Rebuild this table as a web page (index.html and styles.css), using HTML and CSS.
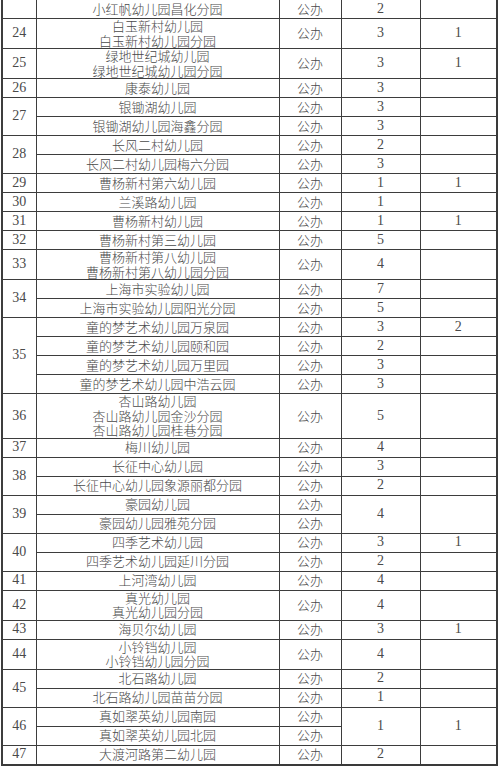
FILE: index.html
```html
<!DOCTYPE html>
<html lang="zh-CN">
<head>
<meta charset="utf-8">
<title>幼儿园名单</title>
<link rel="stylesheet" href="styles.css">
</head>
<body>
<div class="sheet">
<table class="list">
<colgroup>
<col class="c-no"><col class="c-name"><col class="c-type"><col class="c-num"><col class="c-extra">
</colgroup>
<tbody>
<tr class="first"><td class="no"></td><td>小红帆幼儿园昌化分园</td><td>公办</td><td class="num">2</td><td class="num"></td></tr>
<tr><td class="no">24</td><td class="multi">白玉新村幼儿园<br>白玉新村幼儿园分园</td><td>公办</td><td class="num">3</td><td class="num">1</td></tr>
<tr><td class="no">25</td><td class="multi">绿地世纪城幼儿园<br>绿地世纪城幼儿园分园</td><td>公办</td><td class="num">3</td><td class="num">1</td></tr>
<tr><td class="no">26</td><td>康泰幼儿园</td><td>公办</td><td class="num">3</td><td class="num"></td></tr>
<tr><td class="no" rowspan="2">27</td><td>银锄湖幼儿园</td><td>公办</td><td class="num">3</td><td class="num"></td></tr>
<tr><td>银锄湖幼儿园海鑫分园</td><td>公办</td><td class="num">3</td><td class="num"></td></tr>
<tr><td class="no" rowspan="2">28</td><td>长风二村幼儿园</td><td>公办</td><td class="num">2</td><td class="num"></td></tr>
<tr><td>长风二村幼儿园梅六分园</td><td>公办</td><td class="num">3</td><td class="num"></td></tr>
<tr><td class="no">29</td><td>曹杨新村第六幼儿园</td><td>公办</td><td class="num">1</td><td class="num">1</td></tr>
<tr><td class="no">30</td><td>兰溪路幼儿园</td><td>公办</td><td class="num">1</td><td class="num"></td></tr>
<tr><td class="no">31</td><td>曹杨新村幼儿园</td><td>公办</td><td class="num">1</td><td class="num">1</td></tr>
<tr><td class="no">32</td><td>曹杨新村第三幼儿园</td><td>公办</td><td class="num">5</td><td class="num"></td></tr>
<tr><td class="no">33</td><td class="multi">曹杨新村第八幼儿园<br>曹杨新村第八幼儿园分园</td><td>公办</td><td class="num">4</td><td class="num"></td></tr>
<tr><td class="no" rowspan="2">34</td><td>上海市实验幼儿园</td><td>公办</td><td class="num">7</td><td class="num"></td></tr>
<tr><td>上海市实验幼儿园阳光分园</td><td>公办</td><td class="num">5</td><td class="num"></td></tr>
<tr><td class="no" rowspan="4">35</td><td>童的梦艺术幼儿园万泉园</td><td>公办</td><td class="num">3</td><td class="num">2</td></tr>
<tr><td>童的梦艺术幼儿园颐和园</td><td>公办</td><td class="num">2</td><td class="num"></td></tr>
<tr><td>童的梦艺术幼儿园万里园</td><td>公办</td><td class="num">3</td><td class="num"></td></tr>
<tr><td>童的梦艺术幼儿园中浩云园</td><td>公办</td><td class="num">3</td><td class="num"></td></tr>
<tr><td class="no">36</td><td class="multi">杏山路幼儿园<br>杏山路幼儿园金沙分园<br>杏山路幼儿园桂巷分园</td><td>公办</td><td class="num">5</td><td class="num"></td></tr>
<tr><td class="no">37</td><td>梅川幼儿园</td><td>公办</td><td class="num">4</td><td class="num"></td></tr>
<tr><td class="no" rowspan="2">38</td><td>长征中心幼儿园</td><td>公办</td><td class="num">3</td><td class="num"></td></tr>
<tr><td>长征中心幼儿园象源丽都分园</td><td>公办</td><td class="num">2</td><td class="num"></td></tr>
<tr><td class="no" rowspan="2">39</td><td>豪园幼儿园</td><td>公办</td><td class="num" rowspan="2">4</td><td class="num" rowspan="2"></td></tr>
<tr><td>豪园幼儿园雅苑分园</td><td>公办</td></tr>
<tr><td class="no" rowspan="2">40</td><td>四季艺术幼儿园</td><td>公办</td><td class="num">3</td><td class="num">1</td></tr>
<tr><td>四季艺术幼儿园延川分园</td><td>公办</td><td class="num">2</td><td class="num"></td></tr>
<tr><td class="no">41</td><td>上河湾幼儿园</td><td>公办</td><td class="num">4</td><td class="num"></td></tr>
<tr><td class="no">42</td><td class="multi">真光幼儿园<br>真光幼儿园分园</td><td>公办</td><td class="num">4</td><td class="num"></td></tr>
<tr><td class="no">43</td><td>海贝尔幼儿园</td><td>公办</td><td class="num">3</td><td class="num">1</td></tr>
<tr><td class="no">44</td><td class="multi">小铃铛幼儿园<br>小铃铛幼儿园分园</td><td>公办</td><td class="num">4</td><td class="num"></td></tr>
<tr><td class="no" rowspan="2">45</td><td>北石路幼儿园</td><td>公办</td><td class="num">2</td><td class="num"></td></tr>
<tr><td>北石路幼儿园苗苗分园</td><td>公办</td><td class="num">1</td><td class="num"></td></tr>
<tr><td class="no" rowspan="2">46</td><td>真如翠英幼儿园南园</td><td>公办</td><td class="num" rowspan="2">1</td><td class="num" rowspan="2">1</td></tr>
<tr><td>真如翠英幼儿园北园</td><td>公办</td></tr>
<tr><td class="no">47</td><td>大渡河路第二幼儿园</td><td>公办</td><td class="num">2</td><td class="num"></td></tr>
</tbody>
</table>
</div>
</body>
</html>
```
FILE: styles.css
```css
html, body {
  margin: 0;
  padding: 0;
  background: #ffffff;
}

.sheet {
  padding: 0 0 0 1px;
}

.list {
  border-collapse: collapse;
  table-layout: fixed;
  width: 497px;
  font-family: "Noto Sans CJK SC", "Liberation Serif", serif;
  font-size: 13px;
  font-weight: 300;
  color: #4a4a4a;
  border: 2px solid #3a3a3a;
  border-top: none;
}

.c-no { width: 34px; }
.c-name { width: 243px; }
.c-type { width: 62px; }
.c-num { width: 79px; }
.c-extra { width: 77px; }

.list td {
  border: 1px solid #3d3d3d;
  height: 18px;
  padding: 0;
  line-height: 14.5px;
  text-align: center;
  vertical-align: middle;
  white-space: nowrap;
}

.list td.no,
.list td.num {
  font-family: "Liberation Serif", "Noto Sans CJK SC", serif;
  font-size: 14px;
  font-weight: 400;
}

.list td.no {
  border-left-width: 2px;
}

.list tr.first td {
  border-top: none;
}
```
